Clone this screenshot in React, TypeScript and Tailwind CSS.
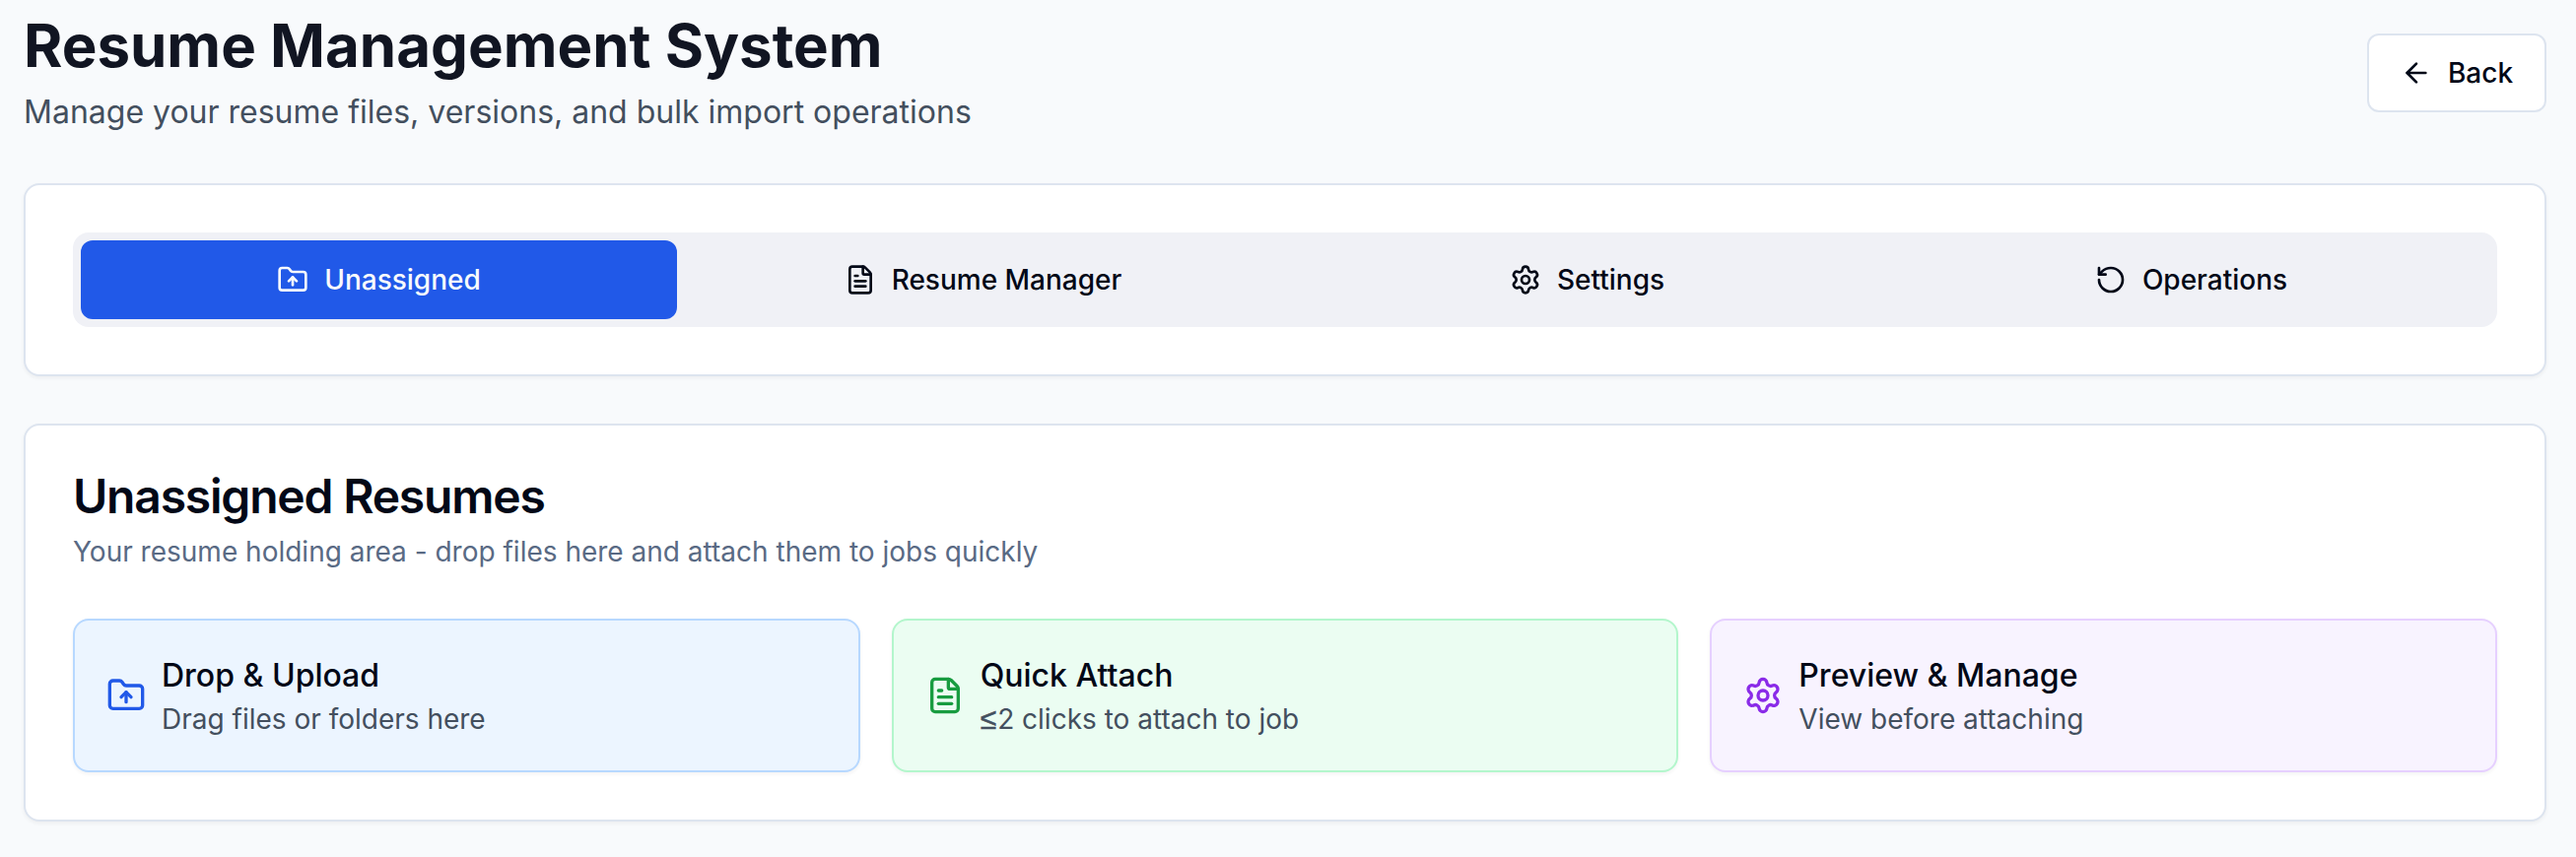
import React from "react";
import { ArrowLeft, FolderUp, FileText, Settings, RotateCcw } from "lucide-react";

const tabs = [
  { label: "Unassigned", Icon: FolderUp },
  { label: "Resume Manager", Icon: FileText },
  { label: "Settings", Icon: Settings },
  { label: "Operations", Icon: RotateCcw },
];

const features = [
  { title: "Drop & Upload", text: "Drag files or folders here", Icon: FolderUp, box: "bg-[#ecf5ff] border-[#b7d8ff]", icon: "text-[#2159e8]" },
  {
    title: "Quick Attach",
    text: (
      <>
        <span className="mr-px font-['Liberation_Sans',sans-serif] text-[30px] leading-none [-webkit-text-stroke:0.5px_#434f5e]">≤</span>2 clicks to attach to job
      </>
    ),
    Icon: FileText,
    box: "bg-[#ebfdf2] border-[#b3f6cc]",
    icon: "text-[#189c40]",
  },
  { title: "Preview & Manage", text: "View before attaching", Icon: Settings, box: "bg-[#f8f3ff] border-[#e6d0ff]", icon: "text-[#8a2be8]" },
];

const card = "rounded-2xl border-2 border-[#dde4ef] bg-white shadow-[0_2px_4px_rgba(0,0,0,0.05)]";

export default function App() {
  return (
    <main className="h-[870px] overflow-hidden bg-[#f8fafc] pr-[30px] pl-6 font-['Inter',sans-serif] text-[#020817]">
      <header className="flex h-[186px] items-start justify-between">
        <div className="pt-[10px]">
          <h1 className="text-[60px] leading-[72px] font-bold text-[#111522]">Resume Management System</h1>
          <p className="text-[32px] leading-[64px] text-[#434f5e]">Manage your resume files, versions, and bulk import operations</p>
        </div>
        <button className="mt-[34px] flex h-20 w-[182px] items-center justify-center gap-4 rounded-xl border-2 border-[#dde4ef] bg-white text-[28px] font-medium">
          <ArrowLeft size={32} />
          Back
        </button>
      </header>
      <section className={`${card} h-[196px] p-12`}>
        <nav className="grid h-24 grid-cols-4 gap-2 rounded-2xl bg-[#f0f1f6] p-2">
          {tabs.map(({ label, Icon }, i) => (
            <button key={label} className={`flex items-center justify-center gap-4 rounded-xl text-[28px] font-medium ${i === 0 ? "bg-[#2159e8] text-[#f8fafc]" : ""}`}>
              <Icon size={32} />
              {label}
            </button>
          ))}
        </nav>
      </section>
      <section className={`${card} mt-12 h-[404px] px-12 pt-12`}>
        <h2 className="text-[48px] leading-[48px] font-semibold tracking-[-1.2px]">Unassigned Resumes</h2>
        <p className="mt-3 text-[28px] leading-10 text-[#596a84]">Your resume holding area - drop files here and attach them to jobs quickly</p>
        <div className="mt-12 grid grid-cols-3 gap-8">
          {features.map(({ title, text, Icon, box, icon }) => (
            <div key={title} className={`flex h-[156px] items-center gap-4 rounded-2xl border-2 px-8 shadow-[0_2px_4px_rgba(0,0,0,0.05)] ${box}`}>
              <Icon size={40} className={icon} />
              <div>
                <h3 className="text-[32px] leading-[48px] font-medium">{title}</h3>
                <p className="text-[28px] leading-10 text-[#434f5e]">{text}</p>
              </div>
            </div>
          ))}
        </div>
      </section>
    </main>
  );
}
